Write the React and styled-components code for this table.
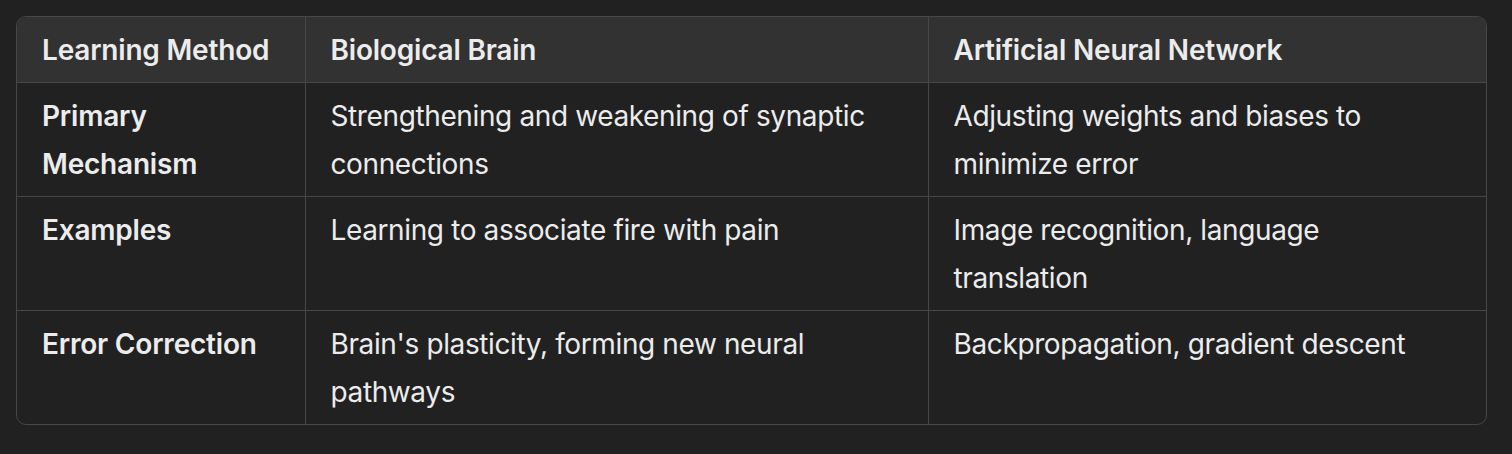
import React from "react";
import styled, { createGlobalStyle } from "styled-components";

const Global = createGlobalStyle`
  html, body { margin: 0; padding: 0; background: #212121; }
  body { font-family: Inter, "Noto Sans", sans-serif; color: #ececec; -webkit-font-smoothing: antialiased; }
`;

const Page = styled.div`
  padding: 16px 25px 16px 16px;
  background: #212121;
  min-height: 454px;
  box-sizing: border-box;
`;

const Frame = styled.div`
  width: 1471px;
  border: 1px solid #474747;
  border-radius: 10px;
  overflow: hidden;
  box-sizing: border-box;
`;

const Table = styled.table`
  width: 100%;
  border-collapse: collapse;
  table-layout: fixed;
  font-size: 28px;
  line-height: 48px;
`;

const HeadRow = styled.tr`
  background: #323232;
`;

const Row = styled.tr`
  border-top: 1px solid #474747;
`;

const Th = styled.th`
  text-align: left;
  font-weight: 600;
  letter-spacing: -0.2px;
  padding: 9px 25px 8px 25px;
  vertical-align: top;
  & + & { border-left: 1px solid #474747; }
`;

const Td = styled.td`
  text-align: left;
  font-weight: ${(p) => (p.$bold ? 600 : 400)};
  letter-spacing: ${(p) => (p.$bold ? "-0.2px" : "-0.38px")};
  padding: 9px 25px 8px 25px;
  vertical-align: top;
  & + & { border-left: 1px solid #474747; }
`;

const rows = [
  ["Primary Mechanism", "Strengthening and weakening of synaptic connections", "Adjusting weights and biases to minimize error"],
  ["Examples", "Learning to associate fire with pain", "Image recognition, language translation"],
  ["Error Correction", "Brain's plasticity, forming new neural pathways", "Backpropagation, gradient descent"],
];

export default function App() {
  return (
    <Page>
      <Global />
      <Frame>
        <Table>
          <colgroup>
            <col style={{ width: 288 }} />
            <col style={{ width: 623 }} />
            <col />
          </colgroup>
          <thead>
            <HeadRow>
              <Th>Learning Method</Th>
              <Th>Biological Brain</Th>
              <Th>Artificial Neural Network</Th>
            </HeadRow>
          </thead>
          <tbody>
            {rows.map((r) => (
              <Row key={r[0]}>
                <Td $bold>{r[0]}</Td>
                <Td>{r[1]}</Td>
                <Td>{r[2]}</Td>
              </Row>
            ))}
          </tbody>
        </Table>
      </Frame>
    </Page>
  );
}
